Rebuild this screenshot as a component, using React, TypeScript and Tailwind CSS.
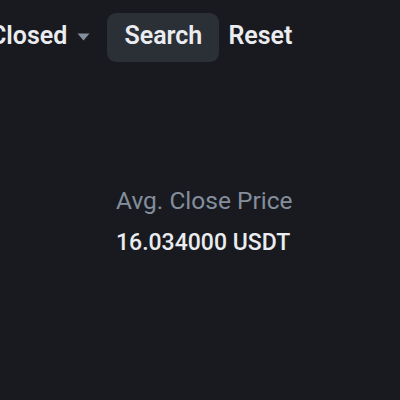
export default function App() {
  return (
    <div className="w-[400px] h-[400px] overflow-hidden bg-[#181a20] text-[#eaecef]" style={{ fontFamily: '"Roboto", "Inter", sans-serif' }}>
      <div className="flex items-center h-[49px] mt-[13px] ml-[-10px]">
        <span className="text-[25px] font-semibold leading-none pb-[4px]">Closed</span>
        <svg width="13" height="8" viewBox="0 0 13 8" className="ml-[10px] mb-[2px]">
          <path d="M0.5 0.5 H12.5 L6.5 7.5 Z" fill="#848e9c" />
        </svg>
        <button className="ml-[17px] h-[49px] w-[112px] rounded-[9px] bg-[#2b2f36] text-[25px] font-semibold leading-none pb-[4px]">Search</button>
        <span className="ml-[9px] text-[25px] font-semibold leading-none pb-[4px]">Reset</span>
      </div>
      <div className="flex flex-col items-start ml-[116px] mt-[127px]">
        <span className="text-[24.5px] leading-none text-[#848e9c]">Avg. Close Price</span>
        <span className="mt-[17px] text-[23px] font-medium leading-none">16.034000 USDT</span>
      </div>
    </div>
  );
}
